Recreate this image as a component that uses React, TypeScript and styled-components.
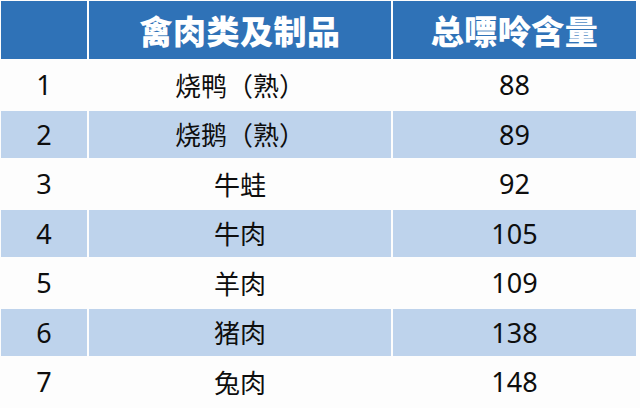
import React from "react"
import styled, { createGlobalStyle } from "styled-components"

const GlobalStyle = createGlobalStyle`
  html, body {
    margin: 0;
    padding: 0;
    background: #ffffff;
  }
`

const Page = styled.div`
  width: 640px;
  height: 408px;
  overflow: hidden;
  background: #fdfdfd;
`

const Table = styled.table`
  border-collapse: separate;
  border-spacing: 2px;
  margin: -1px 0 0 -1px;
  table-layout: fixed;
  font-family: "Noto Sans CJK SC", "Noto Sans", sans-serif;
`

const HeadCell = styled.th<{ $w: number }>`
  width: ${(p) => p.$w}px;
  height: 58px;
  padding: 0;
  background: #2f72b7;
  color: #ffffff;
  font-size: 33px;
  font-weight: 900;
  text-align: center;
  vertical-align: middle;
  letter-spacing: 0.5px;
`

const Cell = styled.td<{ $shaded: boolean; $num?: boolean }>`
  height: 47.5px;
  padding: 0;
  background: ${(p) => (p.$shaded ? "#bed3ec" : "transparent")};
  color: #0e0e0e;
  font-size: ${(p) => (p.$num ? "27px" : "26px")};
  font-family: ${(p) =>
    p.$num ? '"Noto Sans", sans-serif' : '"Noto Sans CJK SC", sans-serif'};
  text-align: center;
  vertical-align: middle;
  line-height: 1;
`

const rows: [string, string][] = [
  ["烧鸭（熟）", "88"],
  ["烧鹅（熟）", "89"],
  ["牛蛙", "92"],
  ["牛肉", "105"],
  ["羊肉", "109"],
  ["猪肉", "138"],
  ["兔肉", "148"],
]

const App = () => (
  <Page>
    <GlobalStyle />
    <Table>
      <thead>
        <tr>
          <HeadCell $w={86}></HeadCell>
          <HeadCell $w={302}>禽肉类及制品</HeadCell>
          <HeadCell $w={243}>总嘌呤含量</HeadCell>
        </tr>
      </thead>
      <tbody>
        {rows.map(([name, value], i) => {
          const shaded = i % 2 === 1
          return (
            <tr key={name}>
              <Cell $shaded={shaded} $num>
                {i + 1}
              </Cell>
              <Cell $shaded={shaded}>{name}</Cell>
              <Cell $shaded={shaded} $num>
                {value}
              </Cell>
            </tr>
          )
        })}
      </tbody>
    </Table>
  </Page>
)

export default App
